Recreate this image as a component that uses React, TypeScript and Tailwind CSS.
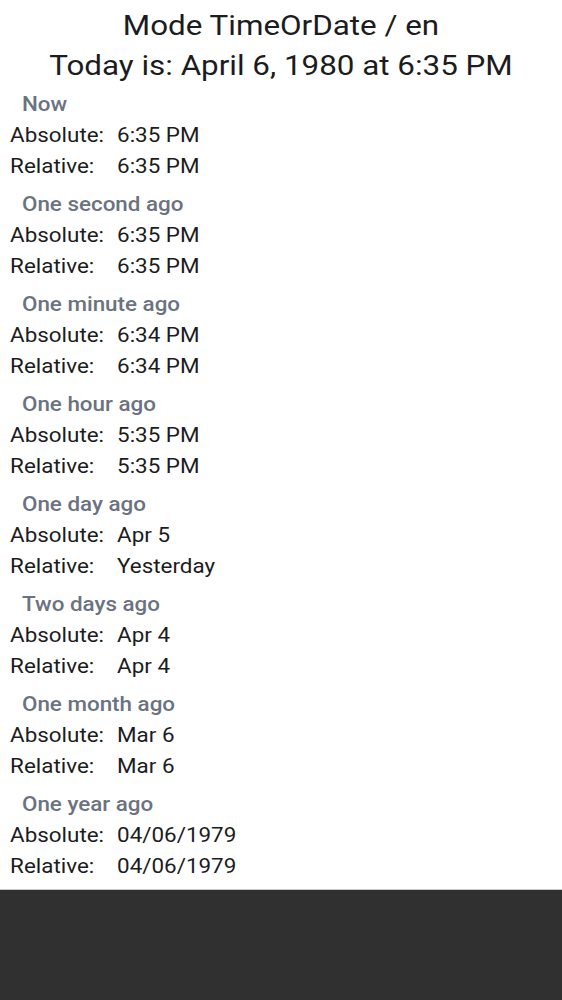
import React from "react";

const sections: { title: string; abs: string; rel: string }[] = [
  { title: "Now", abs: "6:35 PM", rel: "6:35 PM" },
  { title: "One second ago", abs: "6:35 PM", rel: "6:35 PM" },
  { title: "One minute ago", abs: "6:34 PM", rel: "6:34 PM" },
  { title: "One hour ago", abs: "5:35 PM", rel: "5:35 PM" },
  { title: "One day ago", abs: "Apr 5", rel: "Yesterday" },
  { title: "Two days ago", abs: "Apr 4", rel: "Apr 4" },
  { title: "One month ago", abs: "Mar 6", rel: "Mar 6" },
  { title: "One year ago", abs: "04/06/1979", rel: "04/06/1979" },
];

export default function App() {
  return (
    <div className="flex h-[1000px] w-[562px] flex-col overflow-hidden bg-white font-['Roboto',sans-serif]">
      <div className="h-[889px]">
        <div className="origin-center scale-x-[1.12] pt-[6px] text-center text-[28px] leading-[40px] text-[#1c1c1e]">
          <div>Mode TimeOrDate / en</div>
          <div>Today is: April 6, 1980 at 6:35 PM</div>
        </div>
        <div className="origin-left scale-x-[1.12] pt-[3px]">
          {sections.map((s, i) => (
            <div key={i} className={i > 0 ? "mt-[7px]" : ""}>
              <div className="pl-[19.6px] text-[20px] font-medium leading-[31px] text-[#6b7280]">{s.title}</div>
              <div className="flex pl-[9px] text-[20px] leading-[31px] text-[#1c1c1e]">
                <span className="w-[95.5px]">Absolute:</span>
                <span>{s.abs}</span>
              </div>
              <div className="flex pl-[9px] text-[20px] leading-[31px] text-[#1c1c1e]">
                <span className="w-[95.5px]">Relative:</span>
                <span>{s.rel}</span>
              </div>
            </div>
          ))}
        </div>
      </div>
      <div className="flex-1 border-t border-[#c8c8c8] bg-[#303030]" />
    </div>
  );
}
